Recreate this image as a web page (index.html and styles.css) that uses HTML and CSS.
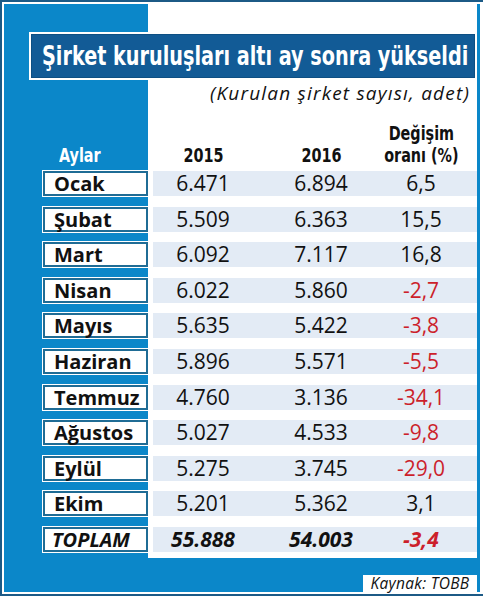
FILE: index.html
```html
<!DOCTYPE html>
<html lang="tr">
<head>
    <meta charset="UTF-8">
    <title>Şirket kuruluşları altı ay sonra yükseldi</title>
    <link rel="stylesheet" href="styles.css">
</head>
<body>
<div class="frame">
    <div class="sheet">
        <div class="content">
            <h1 class="title"><span class="narrow">Şirket kuruluşları altı ay sonra yükseldi</span></h1>
            <p class="subtitle">(Kurulan şirket sayısı, adet)</p>

            <div class="head">
                <div class="head-label"><span class="narrow">Aylar</span></div>
                <div class="cols">
                    <span class="narrow">2015</span>
                    <span class="narrow">2016</span>
                    <span class="narrow">Değişim<br>oranı (%)</span>
                </div>
            </div>

            <div class="row"><div class="month">Ocak</div><div class="cols band"><span>6.471</span><span>6.894</span><span>6,5</span></div></div>
            <div class="row"><div class="month">Şubat</div><div class="cols band"><span>5.509</span><span>6.363</span><span>15,5</span></div></div>
            <div class="row"><div class="month">Mart</div><div class="cols band"><span>6.092</span><span>7.117</span><span>16,8</span></div></div>
            <div class="row"><div class="month">Nisan</div><div class="cols band"><span>6.022</span><span>5.860</span><span class="neg">-2,7</span></div></div>
            <div class="row"><div class="month">Mayıs</div><div class="cols band"><span>5.635</span><span>5.422</span><span class="neg">-3,8</span></div></div>
            <div class="row"><div class="month">Haziran</div><div class="cols band"><span>5.896</span><span>5.571</span><span class="neg">-5,5</span></div></div>
            <div class="row"><div class="month">Temmuz</div><div class="cols band"><span>4.760</span><span>3.136</span><span class="neg">-34,1</span></div></div>
            <div class="row"><div class="month">Ağustos</div><div class="cols band"><span>5.027</span><span>4.533</span><span class="neg">-9,8</span></div></div>
            <div class="row"><div class="month">Eylül</div><div class="cols band"><span>5.275</span><span>3.745</span><span class="neg">-29,0</span></div></div>
            <div class="row"><div class="month">Ekim</div><div class="cols band"><span>5.201</span><span>5.362</span><span>3,1</span></div></div>
            <div class="row total"><div class="month">TOPLAM</div><div class="cols band"><span>55.888</span><span>54.003</span><span class="neg">-3,4</span></div></div>
        </div>
        <div class="footer">
            <span class="source">Kaynak: TOBB</span>
        </div>
    </div>
</div>
</body>
</html>
```

FILE: styles.css
```css
:root {
    --blue: #0b87c9;
    --navy: #125b96;
    --frame: #1c5a86;
    --band: #e3ebf5;
    --box: #1f6c95;
    --red: #cc1f2b;
}
body {
    margin: 0;
    background: #fff;
    color: #111;
    font-family: "Open Sans", "Noto Sans", sans-serif;
}
.frame {
    width: 483px;
    height: 596px;
    box-sizing: border-box;
    border: 2px solid var(--frame);
    border-right: 0;
    padding: 2px 3px 2px 2px;
    background: #fff;
}
.sheet {
    height: 100%;
    background: var(--blue);
    padding-right: 3px;
    display: flex;
    flex-direction: column;
}
.content {
    height: 554px;
    background: linear-gradient(to right, var(--blue) 144px, #fff 144px);
}

/* condensed headline type: DejaVu Condensed squeezed a bit more */
.narrow {
    display: inline-block;
    white-space: nowrap;
    transform: scaleX(0.82);
}
.title {
    margin: 28px 0 0 25px;
    height: 48px;
    box-sizing: border-box;
    border: 2px solid #fff;
    box-shadow: inset 0 0 0 1px #0d4f83;
    background: var(--navy);
    color: #fff;
    display: flex;
    align-items: center;
    padding-left: 11px;
    font-family: "DejaVu Sans Condensed", sans-serif;
    font-weight: bold;
    font-size: 26px;
}
.title .narrow {
    transform: scaleX(0.822);
    transform-origin: left center;
    margin-right: -100px;
}
.subtitle {
    margin: 1px 0 0;
    padding-right: 7px;
    text-align: right;
    font-style: italic;
    font-size: 19px;
    letter-spacing: 1.2px;
    line-height: 24px;
}
.head {
    display: flex;
    align-items: flex-end;
    height: 66px;
    box-sizing: border-box;
    padding-bottom: 4px;
    font-family: "DejaVu Sans Condensed", sans-serif;
    font-weight: bold;
    font-size: 19.5px;
    line-height: 22px;
}
.head-label {
    width: 144px;
    box-sizing: border-box;
    padding-left: 55px;
    color: #fff;
}
.head-label .narrow { transform-origin: left center; }
.cols {
    margin-left: 5px;
    flex: 1;
    display: grid;
    grid-template-columns: 100px 136px 64px;
    padding-right: 24px;
    align-items: end;
    justify-items: center;
    text-align: center;
}
.row {
    display: flex;
    height: 25px;
    margin-bottom: 10.6px;
}
.month {
    margin-left: 39px;
    width: 105px;
    box-sizing: border-box;
    border: 2px solid var(--box);
    box-shadow: 0 0 0 1px #fff;
    background: #fff;
    padding-left: 9px;
    font-weight: bold;
    font-size: 20px;
    line-height: 21px;
}
.band {
    margin-left: 5px;
    background: var(--band);
    align-items: center;
    font-size: 21px;
    line-height: 25px;
}
.neg { color: var(--red); }
.total .month,
.total .band {
    font-style: italic;
    font-weight: bold;
}
.total .month { padding-left: 7px; }
.footer {
    flex: 1;
    display: flex;
    justify-content: flex-end;
    align-items: flex-end;
}
.source {
    width: 114px;
    height: 17px;
    background: #fff;
    text-align: center;
    font-style: italic;
    font-size: 15.5px;
    letter-spacing: 0.3px;
    line-height: 17px;
}
```
